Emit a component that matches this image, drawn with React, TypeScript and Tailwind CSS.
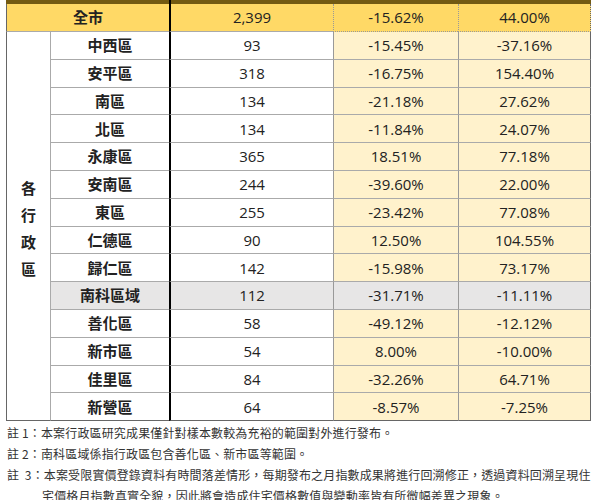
import * as React from 'react';

type Row = { name: string; count: string; a: string; b: string; gray?: boolean };

const rows: Row[] = [
  { name: '中西區', count: '93', a: '-15.45%', b: '-37.16%' },
  { name: '安平區', count: '318', a: '-16.75%', b: '154.40%' },
  { name: '南區', count: '134', a: '-21.18%', b: '27.62%' },
  { name: '北區', count: '134', a: '-11.84%', b: '24.07%' },
  { name: '永康區', count: '365', a: '18.51%', b: '77.18%' },
  { name: '安南區', count: '244', a: '-39.60%', b: '22.00%' },
  { name: '東區', count: '255', a: '-23.42%', b: '77.08%' },
  { name: '仁德區', count: '90', a: '12.50%', b: '104.55%' },
  { name: '歸仁區', count: '142', a: '-15.98%', b: '73.17%' },
  { name: '南科區域', count: '112', a: '-31.71%', b: '-11.11%', gray: true },
  { name: '善化區', count: '58', a: '-49.12%', b: '-12.12%' },
  { name: '新市區', count: '54', a: '8.00%', b: '-10.00%' },
  { name: '佳里區', count: '84', a: '-32.26%', b: '64.71%' },
  { name: '新營區', count: '64', a: '-8.57%', b: '-7.25%' },
];

export default function App() {
  return (
    <div
      lang="zh-Hant-TW"
      className="w-[599px] h-[500px] overflow-hidden bg-white text-[#222] font-['Open_Sans','Noto_Sans_CJK_TC',sans-serif]"
    >
      <div className="pl-[6px]">
        <table className="table-fixed border-separate border-spacing-0 w-[585px] text-[15px] text-center">
          <colgroup>
            <col className="w-[44px]" />
            <col className="w-[119px]" />
            <col className="w-[164px]" />
            <col className="w-[125px]" />
            <col className="w-[133px]" />
          </colgroup>
          <tbody>
            <tr className="h-[4px]">
              <td colSpan={2} className="p-0 bg-[#735a12]" />
              <td className="p-0 bg-[#735a12] border-l-2 border-black" />
              <td colSpan={2} className="p-0 bg-[#735a12]" />
            </tr>
            <tr className="h-[28px] bg-[#ffd966]">
              <td colSpan={2} className="p-0 font-bold border-l border-b border-l-[#666] border-b-[#aaa] border-b-dotted">
                全市
              </td>
              <td className="p-0 border-l-2 border-l-black border-b border-b-dotted border-b-[#aaa]">2,399</td>
              <td className="p-0 border-l border-b border-dotted border-[#999]">-15.62%</td>
              <td className="p-0 border-l border-b border-r border-dotted border-[#999] border-r-solid border-r-[#666]">
                44.00%
              </td>
            </tr>
            {rows.map((r, i) => {
              const last = i === rows.length - 1;
              const bb = last ? 'border-b border-b-[#666] border-b-solid' : 'border-b border-b-dotted border-b-[#aaa]';
              return (
                <tr key={r.name} className="h-[27.8px]">
                  {i === 0 && (
                    <td
                      rowSpan={rows.length}
                      className="p-0 bg-white border-l border-l-[#666] border-b border-b-[#666] font-bold"
                    >
                      <div className="flex flex-col items-center leading-[27px] pt-[6px]">
                        <span>各</span>
                        <span>行</span>
                        <span>政</span>
                        <span>區</span>
                      </div>
                    </td>
                  )}
                  <td
                    className={`p-0 font-bold border-l border-l-dotted border-l-[#aaa] ${bb} ${
                      r.gray ? 'bg-[#e7e6e6]' : 'bg-white'
                    }`}
                  >
                    {r.name}
                  </td>
                  <td className={`p-0 border-l-2 border-l-black ${bb} ${r.gray ? 'bg-[#e7e6e6]' : 'bg-white'}`}>
                    {r.count}
                  </td>
                  <td
                    className={`p-0 border-l border-l-dotted border-l-[#999] ${bb} ${
                      r.gray ? 'bg-[#e7e6e6]' : 'bg-[#fff2cc]'
                    }`}
                  >
                    {r.a}
                  </td>
                  <td
                    className={`p-0 border-l border-l-dotted border-l-[#999] border-r border-r-[#666] ${bb} ${
                      r.gray ? 'bg-[#e7e6e6]' : 'bg-[#fff2cc]'
                    }`}
                  >
                    {r.b}
                  </td>
                </tr>
              );
            })}
          </tbody>
        </table>
      </div>

      {/* notes */}
      <div className="pl-[7px] pt-[1px] text-[12px] leading-[21px] text-[#333] font-['Noto_Sans_CJK_TC',sans-serif] tracking-[0.15px]">
        <p className="whitespace-nowrap">註 1：本案行政區研究成果僅針對樣本數較為充裕的範圍對外進行發布。</p>
        <p className="whitespace-nowrap">註 2：南科區域係指行政區包含善化區、新市區等範圍。</p>
        <p className="whitespace-nowrap">註&nbsp;&nbsp;3：本案受限實價登錄資料有時間落差情形，每期發布之月指數成果將進行回溯修正，透過資料回溯呈現住</p>
        <p className="whitespace-nowrap pl-[35px]">宅價格月指數真實全貌，因此將會造成住宅價格數值與變動率皆有所微幅差異之現象。</p>
      </div>
    </div>
  );
}
